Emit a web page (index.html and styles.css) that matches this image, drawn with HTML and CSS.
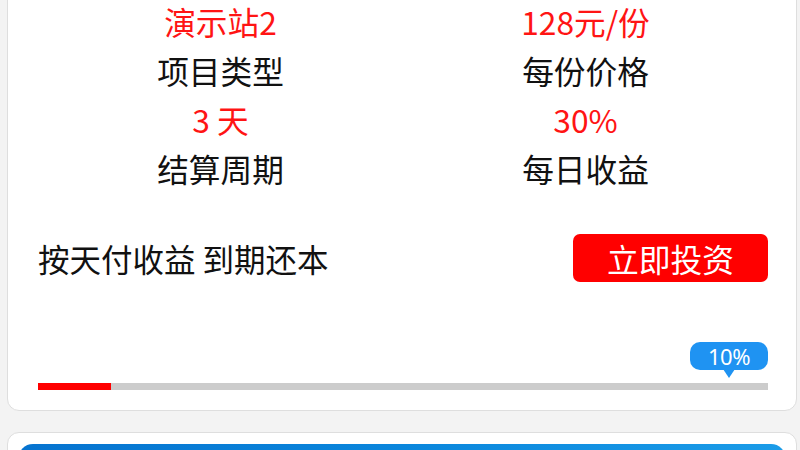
FILE: index.html
```html
<!DOCTYPE html>
<html lang="zh-CN">
<head>
<meta charset="utf-8">
<link rel="stylesheet" href="styles.css">
</head>
<body>
<div class="list">
  <div class="card">
    <div class="info">
      <div class="val">演示站2</div>
      <div class="val">128元/份</div>
      <div class="lab">项目类型</div>
      <div class="lab">每份价格</div>
      <div class="val">3 天</div>
      <div class="val">30%</div>
      <div class="lab">结算周期</div>
      <div class="lab">每日收益</div>
    </div>
    <div class="action">
      <span class="desc">按天付收益 到期还本</span>
      <button class="btn">立即投资</button>
    </div>
    <div class="progress">
      <div class="badge-row"><span class="badge">10%</span></div>
      <div class="bar"><div class="fill" style="width:10%"></div></div>
    </div>
  </div>
  <div class="card card2">
    <div class="banner"></div>
  </div>
</div>
</body>
</html>
```
FILE: styles.css
```css
html, body {
  margin: 0;
  padding: 0;
  background: #f3f3f3;
  font-family: "Noto Sans CJK SC", "Noto Sans", sans-serif;
}
.list {
  margin-top: -14px;
  padding: 0 3px 0 7px;
  display: flex;
  flex-direction: column;
  gap: 21px;
}
.card {
  background: #fff;
  border: 1px solid #dedede;
  border-radius: 12px;
  padding: 10px 28px 20px 30px;
}
.info {
  display: grid;
  grid-template-columns: 1fr 1fr;
  text-align: center;
  font-size: 31.7px;
  line-height: 49px;
}
.val { color: #ff1414; }
.lab { color: #111; }
.action {
  margin-top: 41px;
  display: flex;
  justify-content: space-between;
  align-items: center;
  height: 48px;
}
.desc {
  font-size: 31.5px;
  color: #111;
}
.btn {
  width: 195px;
  height: 48px;
  border: none;
  border-radius: 7px;
  background: #ff0000;
  color: #fff;
  font-family: inherit;
  font-size: 31.8px;
  line-height: 48px;
  padding: 0;
}
.progress {
  margin-top: 60px;
}
.badge-row {
  display: flex;
  justify-content: flex-end;
  height: 41px;
}
.badge {
  position: relative;
  width: 78px;
  height: 28px;
  background: #1f93f2;
  color: #fff;
  border-radius: 10px;
  font-family: "Noto Sans", sans-serif;
  font-size: 22px;
  line-height: 28px;
  text-align: center;
  letter-spacing: -0.5px;
}
.badge::after {
  content: "";
  position: absolute;
  left: 33px;
  top: 27px;
  border-left: 6px solid transparent;
  border-right: 6px solid transparent;
  border-top: 9px solid #1f93f2;
}
.bar {
  height: 7px;
  background: #cccccc;
}
.fill {
  height: 100%;
  background: #ff0000;
}
.card2 {
  padding: 11px 10px 0 10px;
  height: 200px;
}
.banner {
  height: 200px;
  border-radius: 15px 15px 0 0;
  background: linear-gradient(90deg, #0673cf 0%, #0a86dc 50%, #1b9ce8 100%);
}
```
